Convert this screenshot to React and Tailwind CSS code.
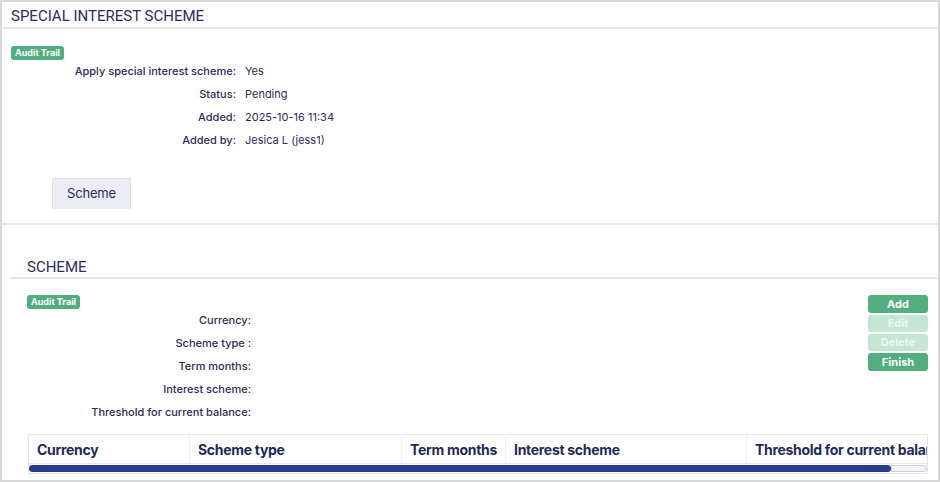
export default function App() {
  const topRows = [
    { label: "Apply special interest scheme:", value: "Yes" },
    { label: "Status:", value: "Pending" },
    { label: "Added:", value: "2025-10-16 11:34" },
    { label: "Added by:", value: "Jesica L (jess1)" },
  ];

  const schemeRows = [
    "Currency:",
    "Scheme type :",
    "Term months:",
    "Interest scheme:",
    "Threshold for current balance:",
  ];

  const columns = [
    { label: "Currency", width: "w-[160px]" },
    { label: "Scheme type", width: "w-[212px]" },
    { label: "Term months", width: "w-[104px]" },
    { label: "Interest scheme", width: "w-[241px]" },
    { label: "Threshold for current balance", width: "w-[260px]" },
  ];

  return (
    <div
      className="w-[940px] h-[482px] bg-white border-2 border-[#d9d9d9] text-[#2b2d5b] overflow-hidden"
      style={{ fontFamily: "Inter, 'Liberation Sans', sans-serif" }}
    >
      {/* Header */}
      <div className="h-[27px] border-b-2 border-[#e8e8e8] px-[9px] flex items-end pb-[3px]">
        <h1 className="text-[15px] leading-none" style={{ fontFamily: "Roboto, 'Liberation Sans', sans-serif" }}>
          SPECIAL INTEREST SCHEME
        </h1>
      </div>

      {/* Details */}
      <div className="px-[9px] pt-[17px]">
        <div className="flex w-fit items-center h-[14px] px-[4px] rounded-[3px] bg-[#52ad7f] text-white text-[9px] font-bold">
          Audit Trail
        </div>
        <div className="grid grid-cols-[225px_1fr] gap-x-[9px]">
          {topRows.map((r) => (
            <div key={r.label} className="contents">
              <div className="h-[23px] flex items-center justify-end text-[11px] font-medium">
                {r.label}
              </div>
              <div className="h-[23px] flex items-center text-[11px]">{r.value}</div>
            </div>
          ))}
        </div>

        <div className="mt-[26px] ml-[41px] w-[79px] h-[31px] bg-[#ececf5] border border-b-0 border-[#e0e0e6] flex items-center justify-center text-[13px] tracking-[-0.2px]">
          Scheme
        </div>
      </div>

      <div className="mt-[14px] border-t-2 border-[#e6e6e6]" />

      {/* Scheme section */}
      <div className="pl-[9px] pt-[33px]">
        <div className="h-[21px] border-b-2 border-[#e8e8e8] pl-[16px] flex items-center">
          <h2 className="text-[15px] leading-none" style={{ fontFamily: "Roboto, 'Liberation Sans', sans-serif" }}>
            SCHEME
          </h2>
        </div>

        <div className="pl-[16px] pr-[10px] pt-[16px]">
          <div className="flex">
            <div className="flex-1">
              <div className="flex w-fit items-center h-[14px] px-[4px] rounded-[3px] bg-[#52ad7f] text-white text-[9px] font-bold">
                Audit Trail
              </div>
              <div className="w-[224px]">
                {schemeRows.map((l) => (
                  <div key={l} className="h-[23px] flex items-center justify-end text-[11px] font-medium">
                    {l}
                  </div>
                ))}
              </div>
            </div>
            <div className="w-[60px] flex flex-col gap-[2px]">
              <button className="h-[18px] rounded-[3px] bg-[#52ad7f] text-white text-[11px] font-bold">Add</button>
              <button className="h-[17px] rounded-[3px] bg-[#c6e6d4] text-[#eef8f2] text-[11px] font-bold">Edit</button>
              <button className="h-[17px] rounded-[3px] bg-[#c6e6d4] text-[#eef8f2] text-[11px] font-bold">Delete</button>
              <button className="h-[18px] rounded-[3px] bg-[#52ad7f] text-white text-[11px] font-bold">Finish</button>
            </div>
          </div>

          {/* Table */}
          <div className="mt-[10px] ml-[1px] border border-[#e6e6e6] overflow-hidden">
            <div className="flex h-[28px] whitespace-nowrap">
              {columns.map((c, i) => (
                <div
                  key={c.label}
                  className={`${c.width} shrink-0 flex items-center pl-[8px] text-[14px] font-bold text-[#1f2a5a] tracking-[-0.3px] ${
                    i > 0 ? "border-l border-[#f0f0f0]" : ""
                  }`}
                >
                  {c.label}
                </div>
              ))}
            </div>
            <div className="h-[10px] flex items-center border-t border-[#e6e6e6]">
              <div className="h-[7px] w-[862px] rounded-full bg-[#283b8c]" />
              <div className="h-[7px] flex-1 rounded-r-full border border-[#c9cde0] bg-[#f3f4f8]" />
            </div>
          </div>
        </div>
      </div>
    </div>
  );
}
